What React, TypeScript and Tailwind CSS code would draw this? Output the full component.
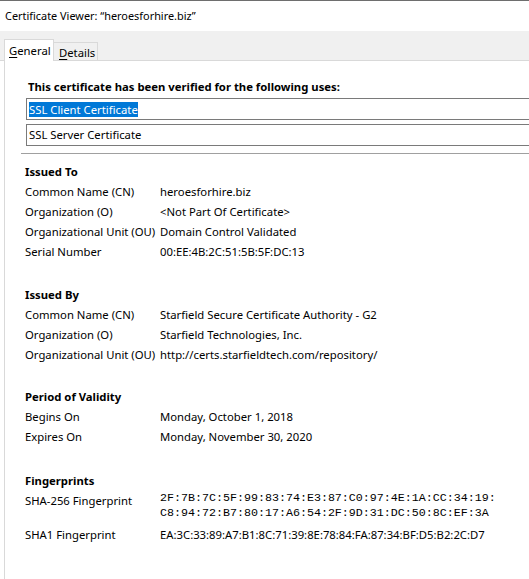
import React from 'react';

type Row = [string, string];

const issuedTo: Row[] = [
  ['Common Name (CN)', 'heroesforhire.biz'],
  ['Organization (O)', '<Not Part Of Certificate>'],
  ['Organizational Unit (OU)', 'Domain Control Validated'],
  ['Serial Number', '00:EE:4B:2C:51:5B:5F:DC:13'],
];

const issuedBy: Row[] = [
  ['Common Name (CN)', 'Starfield Secure Certificate Authority - G2'],
  ['Organization (O)', 'Starfield Technologies, Inc.'],
  ['Organizational Unit (OU)', 'http://certs.starfieldtech.com/repository/'],
];

const validity: Row[] = [
  ['Begins On', 'Monday, October 1, 2018'],
  ['Expires On', 'Monday, November 30, 2020'],
];

const Section = ({ title, rows, className = '' }: { title: string; rows: Row[]; className?: string }) => (
  <div className={className}>
    <div className="h-[19px] leading-[20px] font-bold">{title}</div>
    {rows.map(([label, value]) => (
      <div key={label} className="flex h-[20px] leading-[21px] whitespace-nowrap">
        <div className="w-[135px] shrink-0">{label}</div>
        <div>{value}</div>
      </div>
    ))}
  </div>
);

export default function App() {
  return (
    <div className="w-[529px] h-[579px] overflow-hidden bg-white text-black border-t border-[#6e6e6e] font-['Noto_Sans',sans-serif] text-[11.3px]">
      <div className="h-[30px] pl-[5px] flex items-center text-[10.9px]">Certificate Viewer: “heroesforhire.biz”</div>

      <div className="h-[30px] bg-[#f0f0f0] border-b border-[#d9d9d9] flex items-end pl-[4px]">
        <div className="relative -mb-px h-[22px] w-[50px] bg-white border border-b-0 border-[#d9d9d9] pl-[4px] leading-[21px]">
          <span className="underline underline-offset-2">G</span>eneral
        </div>
        <div className="h-[18px] w-[44px] border-t border-r border-[#d9d9d9] pl-[5px] leading-[19px]">
          <span className="underline underline-offset-2">D</span>etails
        </div>
      </div>

      <div className="ml-[4px] border-l border-[#d9d9d9] h-full w-[640px] pl-[16px]">
        <div className="pt-[17px] pl-[7px] h-[33px] leading-[17px] font-bold">
          This certificate has been verified for the following uses:
        </div>
        <div className="ml-[5px] mt-[4px] flex flex-col gap-[4px]">
          <div className="h-[22px] border border-[#7a7a7a] pl-[2px] flex items-center">
            <span className="bg-[#0078d7] text-white leading-[15px]">SSL Client Certificate</span>
          </div>
          <div className="h-[22px] border border-[#7a7a7a] pl-[2px] flex items-center">
            SSL Server Certificate
          </div>
        </div>
        <div className="mt-[7px] border-t border-[#a0a0a0]" />

        <div className="pl-[4px]">
          <Section title="Issued To" rows={issuedTo} className="mt-[8px]" />
          <Section title="Issued By" rows={issuedBy} className="mt-[24px]" />
          <Section title="Period of Validity" rows={validity} className="mt-[23px]" />

          <div className="mt-[25px]">
            <div className="h-[19px] leading-[20px] font-bold">Fingerprints</div>
            <div className="flex h-[34px] whitespace-nowrap">
              <div className="w-[135px] shrink-0 leading-[22px]">SHA-256 Fingerprint</div>
              <div className="font-['Liberation_Mono',monospace] text-[11.67px] leading-[15px] pt-px">
                <div>2F:7B:7C:5F:99:83:74:E3:87:C0:97:4E:1A:CC:34:19:</div>
                <div>C8:94:72:B7:80:17:A6:54:2F:9D:31:DC:50:8C:EF:3A</div>
              </div>
            </div>
            <div className="flex h-[20px] leading-[21px] whitespace-nowrap">
              <div className="w-[135px] shrink-0">SHA1 Fingerprint</div>
              <div>EA:3C:33:89:A7:B1:8C:71:39:8E:78:84:FA:87:34:BF:D5:B2:2C:D7</div>
            </div>
          </div>
        </div>
      </div>
    </div>
  );
}
